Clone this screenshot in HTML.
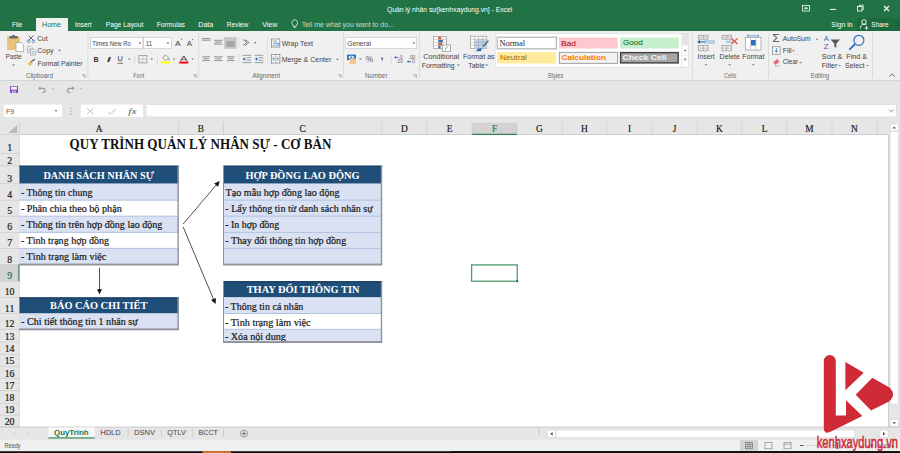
<!DOCTYPE html>
<html><head><meta charset="utf-8">
<style>
*{margin:0;padding:0}
html,body{width:900px;height:453px;overflow:hidden;background:#fff}
svg{display:block}
</style></head><body>
<svg width="900" height="453" viewBox="0 0 900 453">
<rect x="0" y="0" width="900" height="31" fill="#217346" />
<rect x="857" y="18" width="43" height="13" fill="#1b6a3d" />
<rect x="36" y="18" width="32" height="13" fill="#f0f0f0" />
<text x="387" y="11.7" font-family="'Liberation Sans', sans-serif" font-size="7.4" font-weight="normal" fill="#fff" text-anchor="start" textLength="125.2" lengthAdjust="spacingAndGlyphs" >Quản lý nhân sự[kenhxaydung.vn] - Excel</text>
<rect x="802.5" y="5.5" width="7" height="5.5" fill="none" stroke="#fff" stroke-width="0.8"/>
<path d="M804,8.2 L808,8.2 M806,6.8 L806,9.6" fill="none" stroke="#fff" stroke-width="0.9" />
<line x1="830" y1="9.4" x2="836" y2="9.4" stroke="#fff" stroke-width="1" />
<rect x="857.5" y="6.5" width="4.5" height="4.5" fill="none" stroke="#fff" stroke-width="0.8"/>
<path d="M859,6.5 L859,5.2 L863.2,5.2 L863.2,9.5 L862,9.5" fill="none" stroke="#fff" stroke-width="0.8" />
<path d="M884,6 L889,11 M889,6 L884,11" fill="none" stroke="#fff" stroke-width="1.1" />
<text x="12" y="27.3" font-family="'Liberation Sans', sans-serif" font-size="7.2" font-weight="normal" fill="#fff" text-anchor="start" textLength="10.3" lengthAdjust="spacingAndGlyphs" >File</text>
<text x="75" y="27.3" font-family="'Liberation Sans', sans-serif" font-size="7.2" font-weight="normal" fill="#fff" text-anchor="start" textLength="16.7" lengthAdjust="spacingAndGlyphs" >Insert</text>
<text x="105.7" y="27.3" font-family="'Liberation Sans', sans-serif" font-size="7.2" font-weight="normal" fill="#fff" text-anchor="start" textLength="37.6" lengthAdjust="spacingAndGlyphs" >Page Layout</text>
<text x="156.7" y="27.3" font-family="'Liberation Sans', sans-serif" font-size="7.2" font-weight="normal" fill="#fff" text-anchor="start" textLength="28.3" lengthAdjust="spacingAndGlyphs" >Formulas</text>
<text x="198.3" y="27.3" font-family="'Liberation Sans', sans-serif" font-size="7.2" font-weight="normal" fill="#fff" text-anchor="start" textLength="15" lengthAdjust="spacingAndGlyphs" >Data</text>
<text x="226.7" y="27.3" font-family="'Liberation Sans', sans-serif" font-size="7.2" font-weight="normal" fill="#fff" text-anchor="start" textLength="21.6" lengthAdjust="spacingAndGlyphs" >Review</text>
<text x="262.3" y="27.3" font-family="'Liberation Sans', sans-serif" font-size="7.2" font-weight="normal" fill="#fff" text-anchor="start" textLength="15" lengthAdjust="spacingAndGlyphs" >View</text>
<text x="42" y="27.3" font-family="'Liberation Sans', sans-serif" font-size="7.2" font-weight="normal" fill="#217346" text-anchor="start" textLength="19" lengthAdjust="spacingAndGlyphs" >Home</text>
<path d="M292.9,25 a2.9,2.9 0 1 1 3.6,0 l-0.3,1.3 h-3 Z M293.5,27.6 h2.2" fill="none" stroke="#e6efe9" stroke-width="0.8" />
<text x="301.7" y="27.3" font-family="'Liberation Sans', sans-serif" font-size="7.0" font-weight="normal" fill="#c9ddd0" text-anchor="start" textLength="92.3" lengthAdjust="spacingAndGlyphs" >Tell me what you want to do...</text>
<text x="831.3" y="27.3" font-family="'Liberation Sans', sans-serif" font-size="7.0" font-weight="normal" fill="#fff" text-anchor="start" textLength="21.4" lengthAdjust="spacingAndGlyphs" >Sign in</text>
<circle cx="864" cy="22" r="2.3" fill="none" stroke="#fff" stroke-width="0.9"/>
<path d="M860.2,28.5 c0.3,-3 1.6,-4.3 3.8,-4.3 c1.2,0 2,0.3 2.6,1 M866.5,26.3 v3.4 M864.8,28 h3.4" fill="none" stroke="#fff" stroke-width="0.9" />
<text x="871.3" y="27.3" font-family="'Liberation Sans', sans-serif" font-size="7.0" font-weight="normal" fill="#fff" text-anchor="start" textLength="17.4" lengthAdjust="spacingAndGlyphs" >Share</text>
<rect x="0" y="31" width="900" height="49" fill="#f0f0f0" />
<rect x="0" y="80.0" width="900" height="1" fill="#d4d4d4" />
<rect x="87.5" y="33" width="0.8" height="45" fill="#d8d8d8" />
<rect x="198.3" y="33" width="0.8" height="45" fill="#d8d8d8" />
<rect x="343.3" y="33" width="0.8" height="45" fill="#d8d8d8" />
<rect x="419.2" y="33" width="0.8" height="45" fill="#d8d8d8" />
<rect x="692.2" y="33" width="0.8" height="45" fill="#d8d8d8" />
<rect x="768" y="33" width="0.8" height="45" fill="#d8d8d8" />
<rect x="872" y="33" width="0.8" height="45" fill="#d8d8d8" />
<text x="25.9" y="77.7" font-family="'Liberation Sans', sans-serif" font-size="6.6" font-weight="normal" fill="#6a6a6a" text-anchor="start" textLength="27.1" lengthAdjust="spacingAndGlyphs" >Clipboard</text>
<text x="133.3" y="77.7" font-family="'Liberation Sans', sans-serif" font-size="6.6" font-weight="normal" fill="#6a6a6a" text-anchor="start" textLength="10.9" lengthAdjust="spacingAndGlyphs" >Font</text>
<text x="252.4" y="77.7" font-family="'Liberation Sans', sans-serif" font-size="6.6" font-weight="normal" fill="#6a6a6a" text-anchor="start" textLength="27.6" lengthAdjust="spacingAndGlyphs" >Alignment</text>
<text x="365" y="77.7" font-family="'Liberation Sans', sans-serif" font-size="6.6" font-weight="normal" fill="#6a6a6a" text-anchor="start" textLength="22.5" lengthAdjust="spacingAndGlyphs" >Number</text>
<text x="547.7" y="77.7" font-family="'Liberation Sans', sans-serif" font-size="6.6" font-weight="normal" fill="#6a6a6a" text-anchor="start" textLength="15.8" lengthAdjust="spacingAndGlyphs" >Styles</text>
<text x="724" y="77.7" font-family="'Liberation Sans', sans-serif" font-size="6.6" font-weight="normal" fill="#6a6a6a" text-anchor="start" textLength="12.2" lengthAdjust="spacingAndGlyphs" >Cells</text>
<text x="810.8" y="77.7" font-family="'Liberation Sans', sans-serif" font-size="6.6" font-weight="normal" fill="#6a6a6a" text-anchor="start" textLength="18.3" lengthAdjust="spacingAndGlyphs" >Editing</text>
<path d="M82.3,74.8 h2.8 v2.8 M82.7,75.2 l2.2,2.2" fill="none" stroke="#888" stroke-width="0.6" />
<path d="M193.5,74.8 h2.8 v2.8 M193.9,75.2 l2.2,2.2" fill="none" stroke="#888" stroke-width="0.6" />
<path d="M338.5,74.8 h2.8 v2.8 M338.9,75.2 l2.2,2.2" fill="none" stroke="#888" stroke-width="0.6" />
<path d="M413.5,74.8 h2.8 v2.8 M413.9,75.2 l2.2,2.2" fill="none" stroke="#888" stroke-width="0.6" />
<path d="M889.5,76.5 L892.2,74 L894.9,76.5" fill="none" stroke="#555" stroke-width="0.9" />
<rect x="7.1" y="36.4" width="12.5" height="13.5" fill="#eac27a" />
<path d="M9.3,38.6 v-1.6 q0,-1 1,-1 h1.9 a1.3,1.3 0 0 1 2.6,0 h1.9 q1,0 1,1 v1.6 Z" fill="#6b6b6b" stroke="none" stroke-width="1" />
<path d="M16,42.5 h5.2 l2.4,2.4 v6.7 h-7.6 Z" fill="#fff" stroke="#9a9a9a" stroke-width="0.7" />
<text x="5.8" y="59.3" font-family="'Liberation Sans', sans-serif" font-size="7.0" font-weight="normal" fill="#444" text-anchor="start" textLength="15.9" lengthAdjust="spacingAndGlyphs" >Paste</text>
<path d="M12.05,64.6 L14.95,64.6 L13.5,66.05 Z" fill="#666" stroke="none" stroke-width="1" />
<path d="M28.5,35.5 L33.5,40.5 M33.5,35.5 L28.5,40.5" fill="none" stroke="#555" stroke-width="0.9" />
<circle cx="28.6" cy="41.4" r="1.3" fill="none" stroke="#4a7fc1" stroke-width="0.8"/>
<circle cx="33.4" cy="41.4" r="1.3" fill="none" stroke="#4a7fc1" stroke-width="0.8"/>
<text x="37.3" y="41.2" font-family="'Liberation Sans', sans-serif" font-size="7.0" font-weight="normal" fill="#444" text-anchor="start" textLength="10.2" lengthAdjust="spacingAndGlyphs" >Cut</text>
<path d="M27.6,46.6 h3.6 l1,1 v5 h-4.6 Z" fill="#fff" stroke="#8a8a8a" stroke-width="0.6" />
<line x1="28.5" y1="49" x2="30.8" y2="49" stroke="#4a7fc1" stroke-width="0.6" />
<line x1="28.5" y1="50.6" x2="30.8" y2="50.6" stroke="#4a7fc1" stroke-width="0.6" />
<path d="M30.6,49.2 h3.8 l1,1 v4.8 h-4.8 Z" fill="#fff" stroke="#8a8a8a" stroke-width="0.6" />
<line x1="31.6" y1="51.6" x2="34.4" y2="51.6" stroke="#4a7fc1" stroke-width="0.6" />
<line x1="31.6" y1="53.2" x2="34.4" y2="53.2" stroke="#4a7fc1" stroke-width="0.6" />
<text x="37.3" y="53.3" font-family="'Liberation Sans', sans-serif" font-size="7.0" font-weight="normal" fill="#444" text-anchor="start" textLength="16.2" lengthAdjust="spacingAndGlyphs" >Copy</text>
<path d="M58.15,49.8 L61.050000000000004,49.8 L59.6,51.25 Z" fill="#666" stroke="none" stroke-width="1" />
<path d="M27.8,63.6 l2.6,-2.4 l2.2,2.2 l-2.6,2.6 Z" fill="#e8b968" stroke="none" stroke-width="1" />
<path d="M31,61.8 l3.8,-2.6" fill="none" stroke="#555" stroke-width="1.3" />
<text x="37.5" y="65.9" font-family="'Liberation Sans', sans-serif" font-size="7.0" font-weight="normal" fill="#444" text-anchor="start" textLength="45.1" lengthAdjust="spacingAndGlyphs" >Format Painter</text>
<rect x="90.5" y="37.5" width="52.3" height="10.8" fill="#fff" stroke="#c6c6c6" stroke-width="0.7"/>
<text x="92.3" y="45.8" font-family="'Liberation Sans', sans-serif" font-size="7.0" font-weight="normal" fill="#444" text-anchor="start" textLength="38.5" lengthAdjust="spacingAndGlyphs" >Times New Ro</text>
<path d="M138.35000000000002,42.5 L141.25,42.5 L139.8,43.95 Z" fill="#555" stroke="none" stroke-width="1" />
<rect x="143.7" y="37.5" width="27.6" height="10.8" fill="#fff" stroke="#c6c6c6" stroke-width="0.7"/>
<text x="145.7" y="45.8" font-family="'Liberation Sans', sans-serif" font-size="7.0" font-weight="normal" fill="#444" text-anchor="start" textLength="6.6" lengthAdjust="spacingAndGlyphs" >11</text>
<path d="M166.55,42.5 L169.45,42.5 L168,43.95 Z" fill="#555" stroke="none" stroke-width="1" />
<text x="175" y="46" font-family="'Liberation Sans', sans-serif" font-size="7.8" font-weight="normal" fill="#444" text-anchor="start" textLength="5.6" lengthAdjust="spacingAndGlyphs" >A</text>
<circle cx="181.6" cy="39.2" r="0.6" fill="#2f6fc0"/>
<text x="186.7" y="46" font-family="'Liberation Sans', sans-serif" font-size="6.6" font-weight="normal" fill="#444" text-anchor="start" textLength="5.2" lengthAdjust="spacingAndGlyphs" >A</text>
<circle cx="192.6" cy="39.7" r="0.6" fill="#2f6fc0"/>
<text x="93.4" y="61.8" font-family="'Liberation Sans', sans-serif" font-size="7.4" font-weight="bold" fill="#333" text-anchor="start" textLength="5" lengthAdjust="spacingAndGlyphs" >B</text>
<text x="106.9" y="61.8" font-family="'Liberation Sans', sans-serif" font-size="7.4" font-weight="bold" fill="#333" text-anchor="start" textLength="3.6" lengthAdjust="spacingAndGlyphs" font-style="italic">I</text>
<text x="117.6" y="61.4" font-family="'Liberation Sans', sans-serif" font-size="7.2" font-weight="normal" fill="#333" text-anchor="start" textLength="5.3" lengthAdjust="spacingAndGlyphs" >U</text>
<line x1="117.5" y1="63.2" x2="123" y2="63.2" stroke="#333" stroke-width="0.7" />
<path d="M127.74999999999999,58.6 L130.64999999999998,58.6 L129.2,60.050000000000004 Z" fill="#777" stroke="none" stroke-width="1" />
<rect x="134.5" y="55" width="0.7" height="9" fill="#d0d0d0" />
<rect x="138.9" y="55.4" width="8" height="7.5" fill="none" stroke="#8a8a8a" stroke-width="0.7"/>
<line x1="142.9" y1="55.4" x2="142.9" y2="62.9" stroke="#aaa" stroke-width="0.5" />
<line x1="138.9" y1="59.15" x2="146.9" y2="59.15" stroke="#aaa" stroke-width="0.5" />
<path d="M150.25,58.6 L153.14999999999998,58.6 L151.7,60.050000000000004 Z" fill="#777" stroke="none" stroke-width="1" />
<rect x="157" y="55" width="0.7" height="9" fill="#d0d0d0" />
<path d="M162.6,57.6 l3,-2.6 l3,3 l-2.8,2.4 Z" fill="#fff" stroke="#666" stroke-width="0.7" />
<path d="M169,58.2 q1.2,1.4 0,2.2 q-1.2,-0.8 0,-2.2 Z" fill="#2f6fc0" stroke="none" stroke-width="1" />
<rect x="160.8" y="61.4" width="9.5" height="2" fill="#ffff00" />
<path d="M172.55,58.6 L175.45,58.6 L174,60.050000000000004 Z" fill="#777" stroke="none" stroke-width="1" />
<text x="180" y="60.8" font-family="'Liberation Sans', sans-serif" font-size="7.0" font-weight="normal" fill="#444" text-anchor="start" textLength="7.5" lengthAdjust="spacingAndGlyphs" >A</text>
<rect x="179.2" y="61.6" width="9.2" height="1.9" fill="#ff0000" />
<path d="M191.05,58.6 L193.95,58.6 L192.5,60.050000000000004 Z" fill="#777" stroke="none" stroke-width="1" />
<line x1="201.8" y1="38.6" x2="210.5" y2="38.6" stroke="#777" stroke-width="0.8" />
<line x1="201.8" y1="40.2" x2="210.5" y2="40.2" stroke="#777" stroke-width="0.8" />
<line x1="214.0" y1="40.3" x2="222.6" y2="40.3" stroke="#777" stroke-width="0.8" />
<line x1="215.05" y1="42.199999999999996" x2="221.55" y2="42.199999999999996" stroke="#777" stroke-width="0.8" />
<line x1="214.0" y1="44.099999999999994" x2="222.6" y2="44.099999999999994" stroke="#777" stroke-width="0.8" />
<rect x="224.2" y="37.2" width="12.5" height="11.6" fill="#c6c6c6" />
<line x1="226.5" y1="42.2" x2="234.7" y2="42.2" stroke="#777" stroke-width="0.8" />
<line x1="226.5" y1="44.1" x2="234.7" y2="44.1" stroke="#777" stroke-width="0.8" />
<line x1="226.5" y1="46.0" x2="234.7" y2="46.0" stroke="#777" stroke-width="0.8" />
<path d="M243,39.5 l4,3 l-4,3 M245,39.5 l4,3 l-4,3" fill="none" stroke="#666" stroke-width="0.8" />
<path d="M253.75,42.2 L256.65,42.2 L255.2,43.650000000000006 Z" fill="#666" stroke="none" stroke-width="1" />
<line x1="202.2" y1="56.8" x2="209.89999999999998" y2="56.8" stroke="#777" stroke-width="0.8" />
<line x1="203.29999999999998" y1="58.699999999999996" x2="208.79999999999998" y2="58.699999999999996" stroke="#777" stroke-width="0.8" />
<line x1="202.2" y1="60.599999999999994" x2="209.89999999999998" y2="60.599999999999994" stroke="#777" stroke-width="0.8" />
<line x1="214.0" y1="56.8" x2="222.6" y2="56.8" stroke="#777" stroke-width="0.8" />
<line x1="215.3" y1="58.699999999999996" x2="221.3" y2="58.699999999999996" stroke="#777" stroke-width="0.8" />
<line x1="214.0" y1="60.599999999999994" x2="222.6" y2="60.599999999999994" stroke="#777" stroke-width="0.8" />
<line x1="227.0" y1="56.8" x2="234.5" y2="56.8" stroke="#777" stroke-width="0.8" />
<line x1="228.0" y1="58.699999999999996" x2="233.5" y2="58.699999999999996" stroke="#777" stroke-width="0.8" />
<line x1="227.0" y1="60.599999999999994" x2="234.5" y2="60.599999999999994" stroke="#777" stroke-width="0.8" />
<rect x="238.6" y="54" width="0.7" height="9" fill="#d8d8d8" />
<rect x="238.6" y="37" width="0.7" height="11" fill="#d8d8d8" />
<line x1="242.5" y1="55.3" x2="251.3" y2="55.3" stroke="#777" stroke-width="0.7" />
<line x1="242.5" y1="62.6" x2="251.3" y2="62.6" stroke="#777" stroke-width="0.7" />
<line x1="246.7" y1="57.7" x2="251.3" y2="57.7" stroke="#777" stroke-width="0.7" />
<line x1="246.7" y1="60.2" x2="251.3" y2="60.2" stroke="#777" stroke-width="0.7" />
<path d="M242.5,59 l2.2,-1.7 v3.4 Z" fill="#2f6fc0" stroke="none" stroke-width="1" />
<line x1="244.3" y1="59" x2="246.1" y2="59" stroke="#2f6fc0" stroke-width="0.9" />
<line x1="254.6" y1="55.3" x2="263.4" y2="55.3" stroke="#777" stroke-width="0.7" />
<line x1="254.6" y1="62.6" x2="263.4" y2="62.6" stroke="#777" stroke-width="0.7" />
<line x1="258.8" y1="57.7" x2="263.4" y2="57.7" stroke="#777" stroke-width="0.7" />
<line x1="258.8" y1="60.2" x2="263.4" y2="60.2" stroke="#777" stroke-width="0.7" />
<path d="M258.2,59 l-2.4,-1.8 v3.6 Z M254.6,59 h1.6" fill="none" stroke="none" stroke-width="1" />
<path d="M258.2,59 l-2.2,-1.7 v3.4 Z" fill="#2f6fc0" stroke="none" stroke-width="1" />
<line x1="254.6" y1="59" x2="256.4" y2="59" stroke="#2f6fc0" stroke-width="0.9" />
<rect x="267.3" y="37" width="0.7" height="28" fill="#d8d8d8" />
<rect x="271.4" y="39" width="8.4" height="8" fill="#fff" stroke="#777" stroke-width="0.7"/>
<line x1="272.6" y1="41" x2="276.8" y2="41" stroke="#777" stroke-width="0.7" />
<line x1="272.6" y1="45.2" x2="275" y2="45.2" stroke="#777" stroke-width="0.7" />
<path d="M273,43.1 h4.6 q1.6,0 1.6,1 q0,1.1 -1.6,1.1 h-1" fill="none" stroke="#2f6fc0" stroke-width="0.8" />
<path d="M276.4,44.3 l-1.2,0.9 l1.2,0.9 Z" fill="#2f6fc0" stroke="none" stroke-width="1" />
<text x="281.7" y="45.5" font-family="'Liberation Sans', sans-serif" font-size="7.0" font-weight="normal" fill="#444" text-anchor="start" textLength="31.3" lengthAdjust="spacingAndGlyphs" >Wrap Text</text>
<rect x="271.3" y="54.6" width="8.6" height="8.4" fill="#fff" stroke="#777" stroke-width="0.7"/>
<line x1="271.3" y1="57" x2="279.9" y2="57" stroke="#999" stroke-width="0.5" />
<line x1="271.3" y1="60.6" x2="279.9" y2="60.6" stroke="#999" stroke-width="0.5" />
<line x1="275.6" y1="54.6" x2="275.6" y2="57" stroke="#999" stroke-width="0.5" />
<line x1="275.6" y1="60.6" x2="275.6" y2="63" stroke="#999" stroke-width="0.5" />
<line x1="272.8" y1="58.8" x2="278.4" y2="58.8" stroke="#2f6fc0" stroke-width="0.7" />
<path d="M272.4,58.8 l1.3,-1 v2 Z M278.8,58.8 l-1.3,-1 v2 Z" fill="#2f6fc0" stroke="none" stroke-width="1" />
<text x="281.7" y="62.2" font-family="'Liberation Sans', sans-serif" font-size="7.0" font-weight="normal" fill="#444" text-anchor="start" textLength="49.6" lengthAdjust="spacingAndGlyphs" >Merge &amp; Center</text>
<path d="M336.05,58.8 L338.95,58.8 L337.5,60.25 Z" fill="#666" stroke="none" stroke-width="1" />
<rect x="345.5" y="37.5" width="71.2" height="10.8" fill="#fff" stroke="#c6c6c6" stroke-width="0.7"/>
<text x="347.3" y="45.8" font-family="'Liberation Sans', sans-serif" font-size="7.0" font-weight="normal" fill="#444" text-anchor="start" textLength="23.6" lengthAdjust="spacingAndGlyphs" >General</text>
<path d="M412.35,42.5 L415.25,42.5 L413.8,43.95 Z" fill="#555" stroke="none" stroke-width="1" />
<rect x="347" y="54.6" width="9" height="5.4" fill="#2f6fc0" />
<ellipse cx="351.3" cy="57.3" rx="2.8" ry="1.5" fill="#fff"/>
<rect x="349.8" y="58.6" width="6.2" height="5.6" fill="#f3c58c" />
<rect x="350.2" y="56.6" width="2" height="1.6" fill="#2f6fc0" />
<path d="M358.85,58.6 L361.75,58.6 L360.3,60.050000000000004 Z" fill="#777" stroke="none" stroke-width="1" />
<text x="365.8" y="62.2" font-family="'Liberation Sans', sans-serif" font-size="8.6" font-weight="normal" fill="#555" text-anchor="start" textLength="7.4" lengthAdjust="spacingAndGlyphs" >%</text>
<text x="380.8" y="58.6" font-family="'Liberation Sans', sans-serif" font-size="9.5" font-weight="bold" fill="#333" text-anchor="start" >,</text>
<rect x="390.8" y="55" width="0.7" height="9" fill="#d0d0d0" />
<text x="398.6" y="58.8" font-family="'Liberation Sans', sans-serif" font-size="4.8" font-weight="normal" fill="#666" text-anchor="start" >.0</text>
<text x="396.2" y="63.4" font-family="'Liberation Sans', sans-serif" font-size="4.8" font-weight="normal" fill="#666" text-anchor="start" >.00</text>
<path d="M394,57.4 l2,-1.4 v2.8 Z" fill="#2f6fc0" stroke="none" stroke-width="1" />
<line x1="395.5" y1="57.4" x2="398.2" y2="57.4" stroke="#2f6fc0" stroke-width="1" />
<text x="408.6" y="58.8" font-family="'Liberation Sans', sans-serif" font-size="4.8" font-weight="normal" fill="#666" text-anchor="start" >.00</text>
<text x="410.8" y="63.4" font-family="'Liberation Sans', sans-serif" font-size="4.8" font-weight="normal" fill="#666" text-anchor="start" >.0</text>
<path d="M406.7,61.6 l2,-1.4 v2.8 Z" fill="#2f6fc0" stroke="none" stroke-width="1" />
<line x1="408.2" y1="61.6" x2="410.8" y2="61.6" stroke="#2f6fc0" stroke-width="1" />
<rect x="433.3" y="36.6" width="13.4" height="12" fill="#fff" stroke="#8a8a8a" stroke-width="0.6"/>
<line x1="433.3" y1="39.6" x2="446.7" y2="39.6" stroke="#b0b0b0" stroke-width="0.5" />
<line x1="433.3" y1="42.6" x2="446.7" y2="42.6" stroke="#b0b0b0" stroke-width="0.5" />
<line x1="433.3" y1="45.6" x2="446.7" y2="45.6" stroke="#b0b0b0" stroke-width="0.5" />
<line x1="438.2" y1="36.6" x2="438.2" y2="48.6" stroke="#b0b0b0" stroke-width="0.5" />
<line x1="443" y1="36.6" x2="443" y2="48.6" stroke="#b0b0b0" stroke-width="0.5" />
<rect x="438.4" y="36.9" width="2.8" height="2.5" fill="#e0542a" />
<rect x="438.4" y="39.9" width="4.4" height="2.5" fill="#2f6fc0" />
<rect x="438.4" y="42.9" width="3.6" height="2.5" fill="#e0542a" />
<rect x="438.4" y="45.9" width="2.2" height="2.5" fill="#2f6fc0" />
<rect x="442.2" y="45" width="8.3" height="6.3" fill="#fff" stroke="#8a8a8a" stroke-width="0.7"/>
<path d="M447.4,46.3 l-2.6,4" fill="none" stroke="#666" stroke-width="0.7" />
<text x="423.3" y="59.2" font-family="'Liberation Sans', sans-serif" font-size="7.0" font-weight="normal" fill="#444" text-anchor="start" textLength="35.9" lengthAdjust="spacingAndGlyphs" >Conditional</text>
<text x="421.7" y="67.6" font-family="'Liberation Sans', sans-serif" font-size="7.0" font-weight="normal" fill="#444" text-anchor="start" textLength="33" lengthAdjust="spacingAndGlyphs" >Formatting</text>
<path d="M457.05,64.5 L459.95,64.5 L458.5,65.95 Z" fill="#666" stroke="none" stroke-width="1" />
<rect x="470.6" y="36.2" width="16.2" height="12.2" fill="#fff" stroke="#8a8a8a" stroke-width="0.6"/>
<rect x="474.6" y="39.2" width="12.2" height="9.2" fill="#bcd3ef" />
<line x1="470.6" y1="39.2" x2="486.8" y2="39.2" stroke="#a0a0a0" stroke-width="0.5" />
<line x1="470.6" y1="42.2" x2="486.8" y2="42.2" stroke="#a0a0a0" stroke-width="0.5" />
<line x1="470.6" y1="45.2" x2="486.8" y2="45.2" stroke="#a0a0a0" stroke-width="0.5" />
<line x1="474.6" y1="36.2" x2="474.6" y2="48.4" stroke="#a0a0a0" stroke-width="0.5" />
<line x1="478.6" y1="36.2" x2="478.6" y2="48.4" stroke="#a0a0a0" stroke-width="0.5" />
<line x1="482.6" y1="36.2" x2="482.6" y2="48.4" stroke="#a0a0a0" stroke-width="0.5" />
<path d="M475.6,51.2 q2.6,-3.6 6.2,-3 l-0.8,3 Z" fill="#2f6fc0" stroke="none" stroke-width="1" />
<path d="M483.2,46.4 l5.2,-5.6" fill="none" stroke="#666" stroke-width="1.4" />
<text x="463" y="59.2" font-family="'Liberation Sans', sans-serif" font-size="7.0" font-weight="normal" fill="#444" text-anchor="start" textLength="31.6" lengthAdjust="spacingAndGlyphs" >Format as</text>
<text x="468.3" y="67.6" font-family="'Liberation Sans', sans-serif" font-size="7.0" font-weight="normal" fill="#444" text-anchor="start" textLength="16.5" lengthAdjust="spacingAndGlyphs" >Table</text>
<path d="M485.35,64.5 L488.25,64.5 L486.8,65.95 Z" fill="#666" stroke="none" stroke-width="1" />
<rect x="495.3" y="33.6" width="193.4" height="33.6" fill="#fff" stroke="#dadada" stroke-width="0.6"/>
<rect x="497.2" y="37.2" width="59.2" height="11.6" fill="#fff" stroke="#b8b8b8" stroke-width="1.3"/>
<text x="499.5" y="45.5" font-family="'Liberation Serif', serif" font-size="8.4" font-weight="normal" fill="#222" text-anchor="start" textLength="25.5" lengthAdjust="spacingAndGlyphs" >Normal</text>
<rect x="559" y="37.5" width="58.8" height="11" fill="#ffc7ce" />
<text x="561" y="45.5" font-family="'Liberation Sans', sans-serif" font-size="7.7" font-weight="normal" fill="#9c0006" text-anchor="start" textLength="15" lengthAdjust="spacingAndGlyphs" >Bad</text>
<rect x="620" y="37.5" width="58.7" height="11" fill="#c6efce" />
<text x="622.9" y="45.4" font-family="'Liberation Sans', sans-serif" font-size="7.7" font-weight="normal" fill="#006100" text-anchor="start" textLength="19.8" lengthAdjust="spacingAndGlyphs" >Good</text>
<rect x="497.2" y="52" width="58.8" height="11.5" fill="#ffeb9c" />
<text x="500" y="60" font-family="'Liberation Sans', sans-serif" font-size="7.7" font-weight="normal" fill="#9c6500" text-anchor="start" textLength="27" lengthAdjust="spacingAndGlyphs" >Neutral</text>
<rect x="559.3" y="52.3" width="58.4" height="11" fill="#f2f2f2" stroke="#8a8a8a" stroke-width="0.8"/>
<text x="561.5" y="59.9" font-family="'Liberation Sans', sans-serif" font-size="7.7" font-weight="bold" fill="#fa7d00" text-anchor="start" textLength="44.5" lengthAdjust="spacingAndGlyphs" >Calculation</text>
<rect x="620.6" y="52.6" width="57.6" height="10.3" fill="#a5a5a5" stroke="#3f3f3f" stroke-width="1.4"/>
<text x="622.5" y="59.9" font-family="'Liberation Sans', sans-serif" font-size="7.7" font-weight="bold" fill="#f4f4f4" text-anchor="start" textLength="44" lengthAdjust="spacingAndGlyphs" >Check Cell</text>
<rect x="681.8" y="33.6" width="6.9" height="33.6" fill="#fff" stroke="#d8d8d8" stroke-width="0.6"/>
<rect x="682.2" y="34" width="6.1" height="10.8" fill="#e3e3e3" />
<line x1="681.8" y1="45.7" x2="688.7" y2="45.7" stroke="#dadada" stroke-width="0.5" />
<line x1="681.8" y1="55.2" x2="688.7" y2="55.2" stroke="#dadada" stroke-width="0.5" />
<path d="M684,50.6 h2.4" fill="none" stroke="#444" stroke-width="0.8" />
<path d="M683.9,59.6 h2.6 l-1.3,1.3 Z M683.9,58.4 h2.6" fill="none" stroke="#777" stroke-width="0.5" />
<rect x="698.5" y="35.2" width="9.5" height="4" fill="none" stroke="#888" stroke-width="0.6"/>
<line x1="703.25" y1="35.2" x2="703.25" y2="39.2" stroke="#888" stroke-width="0.5" />
<line x1="698.5" y1="37.2" x2="708.0" y2="37.2" stroke="#888" stroke-width="0.5" />
<rect x="698.5" y="45.5" width="9.5" height="5.3" fill="none" stroke="#888" stroke-width="0.6"/>
<line x1="703.25" y1="45.5" x2="703.25" y2="50.8" stroke="#888" stroke-width="0.5" />
<line x1="698.5" y1="48.15" x2="708.0" y2="48.15" stroke="#888" stroke-width="0.5" />
<rect x="705" y="40.6" width="9.5" height="2.6" fill="#b7cfee" stroke="#8aa9d6" stroke-width="0.4"/>
<path d="M697,41.9 l3,-2.2 v1.6 h5 v1.2 h-5 v1.6 Z" fill="#2f6fc0" stroke="none" stroke-width="1" />
<text x="697.6" y="59" font-family="'Liberation Sans', sans-serif" font-size="7.0" font-weight="normal" fill="#444" text-anchor="start" textLength="17.1" lengthAdjust="spacingAndGlyphs" >Insert</text>
<path d="M704.55,64.3 L707.45,64.3 L706,65.75 Z" fill="#777" stroke="none" stroke-width="1" />
<rect x="722" y="35.2" width="9.5" height="4" fill="none" stroke="#888" stroke-width="0.6"/>
<line x1="726.75" y1="35.2" x2="726.75" y2="39.2" stroke="#888" stroke-width="0.5" />
<line x1="722" y1="37.2" x2="731.5" y2="37.2" stroke="#888" stroke-width="0.5" />
<rect x="722" y="45.5" width="9.5" height="5.3" fill="none" stroke="#888" stroke-width="0.6"/>
<line x1="726.75" y1="45.5" x2="726.75" y2="50.8" stroke="#888" stroke-width="0.5" />
<line x1="722" y1="48.15" x2="731.5" y2="48.15" stroke="#888" stroke-width="0.5" />
<rect x="726" y="40.6" width="7" height="2.6" fill="#b7cfee" />
<path d="M731.5,38.5 l6,5.5 M737.5,38.5 l-6,5.5" fill="none" stroke="#e0542a" stroke-width="1.1" />
<text x="719.6" y="59" font-family="'Liberation Sans', sans-serif" font-size="7.0" font-weight="normal" fill="#444" text-anchor="start" textLength="20.3" lengthAdjust="spacingAndGlyphs" >Delete</text>
<path d="M728.15,64.3 L731.0500000000001,64.3 L729.6,65.75 Z" fill="#777" stroke="none" stroke-width="1" />
<rect x="745.5" y="37.5" width="15.5" height="12.5" fill="#fff" stroke="#888" stroke-width="0.6"/>
<line x1="750.7" y1="37.5" x2="750.7" y2="50" stroke="#aaa" stroke-width="0.5" />
<line x1="755.8" y1="37.5" x2="755.8" y2="50" stroke="#aaa" stroke-width="0.5" />
<rect x="750.9" y="40" width="4.8" height="5.5" fill="#2f6fc0" />
<path d="M747,35.8 h12 M747,35.8 l1.5,-1 M747,35.8 l1.5,1 M759,35.8 l-1.5,-1 M759,35.8 l-1.5,1" fill="none" stroke="#2f6fc0" stroke-width="0.6" />
<text x="742.3" y="59" font-family="'Liberation Sans', sans-serif" font-size="7.0" font-weight="normal" fill="#444" text-anchor="start" textLength="22.1" lengthAdjust="spacingAndGlyphs" >Format</text>
<path d="M751.8499999999999,64.3 L754.75,64.3 L753.3,65.75 Z" fill="#777" stroke="none" stroke-width="1" />
<text x="772.2" y="42" font-family="'Liberation Sans', sans-serif" font-size="10" font-weight="normal" fill="#555" text-anchor="start" textLength="7.6" lengthAdjust="spacingAndGlyphs" >Σ</text>
<text x="782.7" y="40.9" font-family="'Liberation Sans', sans-serif" font-size="7.0" font-weight="normal" fill="#444" text-anchor="start" textLength="28.1" lengthAdjust="spacingAndGlyphs" >AutoSum</text>
<path d="M815.55,38.8 L818.45,38.8 L817,40.25 Z" fill="#777" stroke="none" stroke-width="1" />
<rect x="772.6" y="46.8" width="7.5" height="7.4" fill="#fff" stroke="#777" stroke-width="0.7"/>
<path d="M776.3,48 v4 M774.5,50.6 l1.8,1.8 l1.8,-1.8" fill="none" stroke="#2f6fc0" stroke-width="0.9" />
<text x="782.7" y="52.5" font-family="'Liberation Sans', sans-serif" font-size="7.0" font-weight="normal" fill="#444" text-anchor="start" textLength="9" lengthAdjust="spacingAndGlyphs" >Fill</text>
<path d="M792.05,50.3 L794.95,50.3 L793.5,51.75 Z" fill="#777" stroke="none" stroke-width="1" />
<path d="M773,62.5 l4,-3.5 l2.5,2.5 l-4,3.5 Z" fill="#e86a7a" stroke="none" stroke-width="1" />
<line x1="775" y1="66" x2="780" y2="66" stroke="#777" stroke-width="0.5" />
<text x="782.7" y="64.3" font-family="'Liberation Sans', sans-serif" font-size="7.0" font-weight="normal" fill="#444" text-anchor="start" textLength="15.5" lengthAdjust="spacingAndGlyphs" >Clear</text>
<path d="M799.05,62 L801.95,62 L800.5,63.45 Z" fill="#777" stroke="none" stroke-width="1" />
<text x="823.8" y="40.8" font-family="'Liberation Sans', sans-serif" font-size="7.0" font-weight="normal" fill="#2f6fc0" text-anchor="start" textLength="5" lengthAdjust="spacingAndGlyphs" >A</text>
<text x="823.8" y="49.2" font-family="'Liberation Sans', sans-serif" font-size="7.0" font-weight="normal" fill="#8b3fb5" text-anchor="start" textLength="5" lengthAdjust="spacingAndGlyphs" >Z</text>
<path d="M830.5,39.5 h9.5 l-3.7,4 v4.2 l-2,-1 v-3.2 Z" fill="#555" stroke="none" stroke-width="1" />
<text x="821.8" y="59" font-family="'Liberation Sans', sans-serif" font-size="7.0" font-weight="normal" fill="#444" text-anchor="start" textLength="20.8" lengthAdjust="spacingAndGlyphs" >Sort &amp;</text>
<text x="821.8" y="67.6" font-family="'Liberation Sans', sans-serif" font-size="7.0" font-weight="normal" fill="#444" text-anchor="start" textLength="15.5" lengthAdjust="spacingAndGlyphs" >Filter</text>
<path d="M838.15,64.9 L841.0500000000001,64.9 L839.6,66.35000000000001 Z" fill="#777" stroke="none" stroke-width="1" />
<circle cx="858.9" cy="40.3" r="5" fill="none" stroke="#2f6fc0" stroke-width="1.2"/>
<path d="M855.2,44 l-5.8,5.6" fill="none" stroke="#2f6fc0" stroke-width="1.8" />
<text x="846.3" y="59" font-family="'Liberation Sans', sans-serif" font-size="7.0" font-weight="normal" fill="#444" text-anchor="start" textLength="20.7" lengthAdjust="spacingAndGlyphs" >Find &amp;</text>
<text x="845" y="67.6" font-family="'Liberation Sans', sans-serif" font-size="7.0" font-weight="normal" fill="#444" text-anchor="start" textLength="19.5" lengthAdjust="spacingAndGlyphs" >Select</text>
<path d="M865.9499999999999,64.9 L868.85,64.9 L867.4,66.35000000000001 Z" fill="#777" stroke="none" stroke-width="1" />
<rect x="0" y="81" width="900" height="41" fill="#e6e6e6" />
<rect x="10" y="86" width="8" height="7" fill="#8a4cc0" />
<rect x="11.2" y="86.8" width="5.6" height="2.8" fill="#fff" />
<rect x="12.2" y="90.8" width="3.8" height="2.2" fill="#e8dcf2" />
<rect x="13.2" y="91.4" width="0.9" height="1.6" fill="#8a4cc0" />
<rect x="14.6" y="91.4" width="0.9" height="1.6" fill="#8a4cc0" />
<path d="M39.8,88.3 H43 A2.1,2.1 0 0 1 43,92.5 H42.2" fill="none" stroke="#9a9a9a" stroke-width="1.2" />
<path d="M38,88.3 L40.4,86.3 L40.4,90.3 Z" fill="#9a9a9a" stroke="none" stroke-width="1" />
<path d="M51.55,88.3 L54.45,88.3 L53,89.75 Z" fill="#b5b5b5" stroke="none" stroke-width="1" />
<path d="M72.8,88.3 H69.6 A2.1,2.1 0 0 0 69.6,92.5 H70.4" fill="none" stroke="#9a9a9a" stroke-width="1.2" />
<path d="M74.6,88.3 L72.2,86.3 L72.2,90.3 Z" fill="#9a9a9a" stroke="none" stroke-width="1" />
<path d="M79.85,88.3 L82.75,88.3 L81.3,89.75 Z" fill="#b5b5b5" stroke="none" stroke-width="1" />
<rect x="3.8" y="104.6" width="58.2" height="12.3" fill="#fff" />
<text x="6" y="113.6" font-family="'Liberation Sans', sans-serif" font-size="7.4" font-weight="normal" fill="#555" text-anchor="start" textLength="8" lengthAdjust="spacingAndGlyphs" >F9</text>
<path d="M54.55,110.2 L57.45,110.2 L56,111.65 Z" fill="#555" stroke="none" stroke-width="1" />
<rect x="70.4" y="107.5" width="1" height="1" fill="#888" />
<rect x="70.4" y="110.5" width="1" height="1" fill="#888" />
<rect x="70.4" y="113.5" width="1" height="1" fill="#888" />
<rect x="80.7" y="104.6" width="62.3" height="12.3" fill="#fff" />
<path d="M87,108.3 l6.5,6 M93.5,108.3 l-6.5,6" fill="none" stroke="#b0b0b0" stroke-width="0.8" />
<path d="M107.6,111.8 l2.6,2.4 l5.4,-5" fill="none" stroke="#b0b0b0" stroke-width="0.9" />
<text x="128.3" y="114" font-family="'Liberation Serif', serif" font-size="9" font-weight="normal" fill="#555" text-anchor="start" textLength="8.3" lengthAdjust="spacingAndGlyphs" font-style="italic">fx</text>
<rect x="146" y="104.6" width="750.3" height="12.3" fill="#fdfdfd" stroke="#d6d6d6" stroke-width="0.5"/>
<path d="M889.5,109.8 l2,1.8 l2,-1.8" fill="none" stroke="#555" stroke-width="0.7" />
<rect x="0" y="122" width="888" height="12.8" fill="#e6e6e6" />
<rect x="472" y="122.8" width="45" height="11.4" fill="#d3d3d3" />
<rect x="19.1" y="122" width="0.8" height="12.5" fill="#cfcfcf" />
<rect x="178.2" y="122" width="0.8" height="12.5" fill="#cfcfcf" />
<rect x="223.0" y="122" width="0.8" height="12.5" fill="#cfcfcf" />
<rect x="381.6" y="122" width="0.8" height="12.5" fill="#cfcfcf" />
<rect x="426.6" y="122" width="0.8" height="12.5" fill="#cfcfcf" />
<rect x="471.6" y="122" width="0.8" height="12.5" fill="#cfcfcf" />
<rect x="516.6" y="122" width="0.8" height="12.5" fill="#cfcfcf" />
<rect x="561.6" y="122" width="0.8" height="12.5" fill="#cfcfcf" />
<rect x="606.6" y="122" width="0.8" height="12.5" fill="#cfcfcf" />
<rect x="651.6" y="122" width="0.8" height="12.5" fill="#cfcfcf" />
<rect x="696.6" y="122" width="0.8" height="12.5" fill="#cfcfcf" />
<rect x="741.6" y="122" width="0.8" height="12.5" fill="#cfcfcf" />
<rect x="786.6" y="122" width="0.8" height="12.5" fill="#cfcfcf" />
<rect x="831.6" y="122" width="0.8" height="12.5" fill="#cfcfcf" />
<rect x="876.6" y="122" width="0.8" height="12.5" fill="#cfcfcf" />
<text x="99.05" y="132.1" font-family="'Liberation Serif', serif" font-size="9.4" font-weight="normal" fill="#1a1a1a" text-anchor="middle" stroke="#1a1a1a" stroke-width="0.18">A</text>
<text x="201.0" y="132.1" font-family="'Liberation Serif', serif" font-size="9.4" font-weight="normal" fill="#1a1a1a" text-anchor="middle" stroke="#1a1a1a" stroke-width="0.18">B</text>
<text x="302.7" y="132.1" font-family="'Liberation Serif', serif" font-size="9.4" font-weight="normal" fill="#1a1a1a" text-anchor="middle" stroke="#1a1a1a" stroke-width="0.18">C</text>
<text x="404.5" y="132.1" font-family="'Liberation Serif', serif" font-size="9.4" font-weight="normal" fill="#1a1a1a" text-anchor="middle" stroke="#1a1a1a" stroke-width="0.18">D</text>
<text x="449.5" y="132.1" font-family="'Liberation Serif', serif" font-size="9.4" font-weight="normal" fill="#1a1a1a" text-anchor="middle" stroke="#1a1a1a" stroke-width="0.18">E</text>
<text x="494.5" y="132.1" font-family="'Liberation Serif', serif" font-size="9.4" font-weight="normal" fill="#217346" text-anchor="middle" stroke="#217346" stroke-width="0.18">F</text>
<text x="539.5" y="132.1" font-family="'Liberation Serif', serif" font-size="9.4" font-weight="normal" fill="#1a1a1a" text-anchor="middle" stroke="#1a1a1a" stroke-width="0.18">G</text>
<text x="584.5" y="132.1" font-family="'Liberation Serif', serif" font-size="9.4" font-weight="normal" fill="#1a1a1a" text-anchor="middle" stroke="#1a1a1a" stroke-width="0.18">H</text>
<text x="629.5" y="132.1" font-family="'Liberation Serif', serif" font-size="9.4" font-weight="normal" fill="#1a1a1a" text-anchor="middle" stroke="#1a1a1a" stroke-width="0.18">I</text>
<text x="674.5" y="132.1" font-family="'Liberation Serif', serif" font-size="9.4" font-weight="normal" fill="#1a1a1a" text-anchor="middle" stroke="#1a1a1a" stroke-width="0.18">J</text>
<text x="719.5" y="132.1" font-family="'Liberation Serif', serif" font-size="9.4" font-weight="normal" fill="#1a1a1a" text-anchor="middle" stroke="#1a1a1a" stroke-width="0.18">K</text>
<text x="764.5" y="132.1" font-family="'Liberation Serif', serif" font-size="9.4" font-weight="normal" fill="#1a1a1a" text-anchor="middle" stroke="#1a1a1a" stroke-width="0.18">L</text>
<text x="809.5" y="132.1" font-family="'Liberation Serif', serif" font-size="9.4" font-weight="normal" fill="#1a1a1a" text-anchor="middle" stroke="#1a1a1a" stroke-width="0.18">M</text>
<text x="854.5" y="132.1" font-family="'Liberation Serif', serif" font-size="9.4" font-weight="normal" fill="#1a1a1a" text-anchor="middle" stroke="#1a1a1a" stroke-width="0.18">N</text>
<rect x="0" y="134.3" width="888" height="0.9" fill="#c6c6c6" />
<rect x="472.3" y="133.8" width="44.6" height="1.1" fill="#217346" />
<path d="M8.2,133 L17.2,133 L17.2,125 Z" fill="#b9b9b9" stroke="none" stroke-width="1" />
<rect x="0" y="134.8" width="19.5" height="292.2" fill="#e6e6e6" />
<rect x="0" y="264.5" width="19.5" height="16.69999999999999" fill="#d3d3d3" />
<rect x="0" y="153.0" width="19.5" height="0.8" fill="#cfcfcf" />
<rect x="0" y="165.29999999999998" width="19.5" height="0.8" fill="#cfcfcf" />
<rect x="0" y="183.29999999999998" width="19.5" height="0.8" fill="#cfcfcf" />
<rect x="0" y="199.79999999999998" width="19.5" height="0.8" fill="#cfcfcf" />
<rect x="0" y="215.79999999999998" width="19.5" height="0.8" fill="#cfcfcf" />
<rect x="0" y="232.0" width="19.5" height="0.8" fill="#cfcfcf" />
<rect x="0" y="248.0" width="19.5" height="0.8" fill="#cfcfcf" />
<rect x="0" y="264.1" width="19.5" height="0.8" fill="#cfcfcf" />
<rect x="0" y="280.8" width="19.5" height="0.8" fill="#cfcfcf" />
<rect x="0" y="297.0" width="19.5" height="0.8" fill="#cfcfcf" />
<rect x="0" y="313.1" width="19.5" height="0.8" fill="#cfcfcf" />
<rect x="0" y="328.90000000000003" width="19.5" height="0.8" fill="#cfcfcf" />
<rect x="0" y="341.6" width="19.5" height="0.8" fill="#cfcfcf" />
<rect x="0" y="353.90000000000003" width="19.5" height="0.8" fill="#cfcfcf" />
<rect x="0" y="365.90000000000003" width="19.5" height="0.8" fill="#cfcfcf" />
<rect x="0" y="378.20000000000005" width="19.5" height="0.8" fill="#cfcfcf" />
<rect x="0" y="390.40000000000003" width="19.5" height="0.8" fill="#cfcfcf" />
<rect x="0" y="402.8" width="19.5" height="0.8" fill="#cfcfcf" />
<rect x="0" y="414.8" width="19.5" height="0.8" fill="#cfcfcf" />
<rect x="0" y="426.6" width="19.5" height="0.8" fill="#cfcfcf" />
<text x="9.6" y="151.4" font-family="'Liberation Serif', serif" font-size="9.9" font-weight="normal" fill="#1a1a1a" text-anchor="middle" stroke="#1a1a1a" stroke-width="0.2">1</text>
<text x="9.6" y="163.7" font-family="'Liberation Serif', serif" font-size="9.9" font-weight="normal" fill="#1a1a1a" text-anchor="middle" stroke="#1a1a1a" stroke-width="0.2">2</text>
<text x="9.6" y="181.7" font-family="'Liberation Serif', serif" font-size="9.9" font-weight="normal" fill="#1a1a1a" text-anchor="middle" stroke="#1a1a1a" stroke-width="0.2">3</text>
<text x="9.6" y="198.2" font-family="'Liberation Serif', serif" font-size="9.9" font-weight="normal" fill="#1a1a1a" text-anchor="middle" stroke="#1a1a1a" stroke-width="0.2">4</text>
<text x="9.6" y="214.2" font-family="'Liberation Serif', serif" font-size="9.9" font-weight="normal" fill="#1a1a1a" text-anchor="middle" stroke="#1a1a1a" stroke-width="0.2">5</text>
<text x="9.6" y="230.4" font-family="'Liberation Serif', serif" font-size="9.9" font-weight="normal" fill="#1a1a1a" text-anchor="middle" stroke="#1a1a1a" stroke-width="0.2">6</text>
<text x="9.6" y="246.4" font-family="'Liberation Serif', serif" font-size="9.9" font-weight="normal" fill="#1a1a1a" text-anchor="middle" stroke="#1a1a1a" stroke-width="0.2">7</text>
<text x="9.6" y="262.5" font-family="'Liberation Serif', serif" font-size="9.9" font-weight="normal" fill="#1a1a1a" text-anchor="middle" stroke="#1a1a1a" stroke-width="0.2">8</text>
<text x="9.6" y="279.2" font-family="'Liberation Serif', serif" font-size="9.9" font-weight="normal" fill="#217346" text-anchor="middle" stroke="#217346" stroke-width="0.2">9</text>
<text x="9.6" y="295.4" font-family="'Liberation Serif', serif" font-size="9.9" font-weight="normal" fill="#1a1a1a" text-anchor="middle" stroke="#1a1a1a" stroke-width="0.2">10</text>
<text x="9.6" y="311.5" font-family="'Liberation Serif', serif" font-size="9.9" font-weight="normal" fill="#1a1a1a" text-anchor="middle" stroke="#1a1a1a" stroke-width="0.2">11</text>
<text x="9.6" y="327.3" font-family="'Liberation Serif', serif" font-size="9.9" font-weight="normal" fill="#1a1a1a" text-anchor="middle" stroke="#1a1a1a" stroke-width="0.2">12</text>
<text x="9.6" y="340.0" font-family="'Liberation Serif', serif" font-size="9.9" font-weight="normal" fill="#1a1a1a" text-anchor="middle" stroke="#1a1a1a" stroke-width="0.2">13</text>
<text x="9.6" y="352.3" font-family="'Liberation Serif', serif" font-size="9.9" font-weight="normal" fill="#1a1a1a" text-anchor="middle" stroke="#1a1a1a" stroke-width="0.2">14</text>
<text x="9.6" y="364.3" font-family="'Liberation Serif', serif" font-size="9.9" font-weight="normal" fill="#1a1a1a" text-anchor="middle" stroke="#1a1a1a" stroke-width="0.2">15</text>
<text x="9.6" y="376.6" font-family="'Liberation Serif', serif" font-size="9.9" font-weight="normal" fill="#1a1a1a" text-anchor="middle" stroke="#1a1a1a" stroke-width="0.2">16</text>
<text x="9.6" y="388.8" font-family="'Liberation Serif', serif" font-size="9.9" font-weight="normal" fill="#1a1a1a" text-anchor="middle" stroke="#1a1a1a" stroke-width="0.2">17</text>
<text x="9.6" y="401.2" font-family="'Liberation Serif', serif" font-size="9.9" font-weight="normal" fill="#1a1a1a" text-anchor="middle" stroke="#1a1a1a" stroke-width="0.2">18</text>
<text x="9.6" y="413.2" font-family="'Liberation Serif', serif" font-size="9.9" font-weight="normal" fill="#1a1a1a" text-anchor="middle" stroke="#1a1a1a" stroke-width="0.2">19</text>
<text x="9.6" y="425.0" font-family="'Liberation Serif', serif" font-size="9.9" font-weight="normal" fill="#1a1a1a" text-anchor="middle" stroke="#1a1a1a" stroke-width="0.2">20</text>
<rect x="19.0" y="134.8" width="0.8" height="292.2" fill="#d2d2d2" />
<rect x="18.3" y="264.8" width="1.1" height="16.399999999999988" fill="#3a875a" />
<rect x="20" y="135.2" width="868" height="291.8" fill="#fff" />
<text x="69.6" y="149.3" font-family="'Liberation Serif', serif" font-size="13.9" font-weight="bold" fill="#111" text-anchor="start" textLength="261.8" lengthAdjust="spacingAndGlyphs" >QUY TRÌNH QUẢN LÝ NHÂN SỰ - CƠ BẢN</text>
<rect x="19.5" y="165.7" width="159.1" height="18.0" fill="#1f4e79" />
<text x="43.4" y="179.2" font-family="'Liberation Serif', serif" font-size="10.3" font-weight="bold" fill="#fff" text-anchor="start" textLength="110.6" lengthAdjust="spacingAndGlyphs" >DANH SÁCH NHÂN SỰ</text>
<rect x="19.5" y="183.7" width="159.1" height="16.5" fill="#d9e1f2" />
<text x="20.9" y="195.6" font-family="'Liberation Serif', serif" font-size="10.2" font-weight="normal" fill="#1a1a1a" text-anchor="start" textLength="71.6" lengthAdjust="spacingAndGlyphs" stroke="#1a1a1a" stroke-width="0.22">- Thông tin chung</text>
<rect x="19.5" y="200.2" width="159.1" height="16.0" fill="#ffffff" />
<rect x="19.5" y="199.7" width="159.1" height="0.9" fill="#a9bde0" />
<text x="20.9" y="211.70000000000002" font-family="'Liberation Serif', serif" font-size="10.2" font-weight="normal" fill="#1a1a1a" text-anchor="start" textLength="100.9" lengthAdjust="spacingAndGlyphs" stroke="#1a1a1a" stroke-width="0.22">- Phân chia theo bộ phận</text>
<rect x="19.5" y="216.2" width="159.1" height="16.200000000000017" fill="#d9e1f2" />
<rect x="19.5" y="215.7" width="159.1" height="0.9" fill="#a9bde0" />
<text x="20.9" y="227.8" font-family="'Liberation Serif', serif" font-size="10.2" font-weight="normal" fill="#1a1a1a" text-anchor="start" textLength="141.5" lengthAdjust="spacingAndGlyphs" stroke="#1a1a1a" stroke-width="0.22">- Thông tin trên hợp đồng lao động</text>
<rect x="19.5" y="232.4" width="159.1" height="16.0" fill="#ffffff" />
<rect x="19.5" y="231.9" width="159.1" height="0.9" fill="#a9bde0" />
<text x="20.9" y="243.9" font-family="'Liberation Serif', serif" font-size="10.2" font-weight="normal" fill="#1a1a1a" text-anchor="start" textLength="88.2" lengthAdjust="spacingAndGlyphs" stroke="#1a1a1a" stroke-width="0.22">- Tình trạng hợp đồng</text>
<rect x="19.5" y="248.4" width="159.1" height="16.099999999999994" fill="#d9e1f2" />
<rect x="19.5" y="247.9" width="159.1" height="0.9" fill="#a9bde0" />
<text x="20.9" y="259.9" font-family="'Liberation Serif', serif" font-size="10.2" font-weight="normal" fill="#1a1a1a" text-anchor="start" textLength="85.4" lengthAdjust="spacingAndGlyphs" stroke="#1a1a1a" stroke-width="0.22">- Tình trạng làm việc</text>
<rect x="19.2" y="165.7" width="159.7" height="1.1" fill="#163b60" />
<rect x="177.4" y="165.7" width="1.4" height="99.30000000000001" fill="#8e929a" />
<rect x="19.1" y="263.6" width="159.7" height="1.9" fill="#8e929a" />
<rect x="223.4" y="165.7" width="158.6" height="18.0" fill="#1f4e79" />
<text x="245.5" y="179.2" font-family="'Liberation Serif', serif" font-size="10.3" font-weight="bold" fill="#fff" text-anchor="start" textLength="114" lengthAdjust="spacingAndGlyphs" >HỢP ĐỒNG LAO ĐỘNG</text>
<rect x="223.4" y="183.7" width="158.6" height="16.5" fill="#d9e1f2" />
<text x="225.6" y="195.9" font-family="'Liberation Serif', serif" font-size="10.2" font-weight="normal" fill="#1a1a1a" text-anchor="start" textLength="114" lengthAdjust="spacingAndGlyphs" stroke="#1a1a1a" stroke-width="0.22">Tạo mẫu hợp đồng lao động</text>
<rect x="223.4" y="200.2" width="158.6" height="16.0" fill="#d9e1f2" />
<rect x="223.4" y="199.7" width="158.6" height="0.9" fill="#a9bde0" />
<text x="225.3" y="212.20000000000002" font-family="'Liberation Serif', serif" font-size="10.2" font-weight="normal" fill="#1a1a1a" text-anchor="start" textLength="147.4" lengthAdjust="spacingAndGlyphs" stroke="#1a1a1a" stroke-width="0.22">- Lấy thông tin từ danh sách nhân sự</text>
<rect x="223.4" y="216.2" width="158.6" height="16.200000000000017" fill="#d9e1f2" />
<rect x="223.4" y="215.7" width="158.6" height="0.9" fill="#a9bde0" />
<text x="225.3" y="228.1" font-family="'Liberation Serif', serif" font-size="10.2" font-weight="normal" fill="#1a1a1a" text-anchor="start" textLength="53.9" lengthAdjust="spacingAndGlyphs" stroke="#1a1a1a" stroke-width="0.22">- In hợp đồng</text>
<rect x="223.4" y="232.4" width="158.6" height="16.0" fill="#d9e1f2" />
<rect x="223.4" y="231.9" width="158.6" height="0.9" fill="#a9bde0" />
<text x="225.3" y="244.0" font-family="'Liberation Serif', serif" font-size="10.2" font-weight="normal" fill="#1a1a1a" text-anchor="start" textLength="120.9" lengthAdjust="spacingAndGlyphs" stroke="#1a1a1a" stroke-width="0.22">- Thay đổi thông tin hợp đồng</text>
<rect x="223.4" y="248.4" width="158.6" height="16.099999999999994" fill="#d9e1f2" />
<rect x="223.4" y="247.9" width="158.6" height="0.9" fill="#a9bde0" />
<rect x="223.1" y="165.7" width="159.2" height="1.1" fill="#163b60" />
<rect x="223.0" y="165.7" width="1" height="99.30000000000001" fill="#8e929a" />
<rect x="380.8" y="165.7" width="1.4" height="99.30000000000001" fill="#8e929a" />
<rect x="223.0" y="263.6" width="159.2" height="1.9" fill="#8e929a" />
<rect x="19.5" y="297.4" width="159.1" height="16.100000000000023" fill="#1f4e79" />
<text x="50" y="308.9" font-family="'Liberation Serif', serif" font-size="10.3" font-weight="bold" fill="#fff" text-anchor="start" textLength="97.3" lengthAdjust="spacingAndGlyphs" >BÁO CÁO CHI TIẾT</text>
<rect x="19.5" y="313.5" width="159.1" height="15.800000000000011" fill="#d9e1f2" />
<text x="21.1" y="325.29999999999995" font-family="'Liberation Serif', serif" font-size="10.2" font-weight="normal" fill="#1a1a1a" text-anchor="start" textLength="116.7" lengthAdjust="spacingAndGlyphs" stroke="#1a1a1a" stroke-width="0.22">- Chi tiết thông tin 1 nhân sự</text>
<rect x="19.2" y="297.4" width="159.7" height="1.1" fill="#163b60" />
<rect x="177.4" y="297.4" width="1.4" height="32.400000000000034" fill="#8e929a" />
<rect x="19.1" y="328.40000000000003" width="159.7" height="1.9" fill="#8e929a" />
<rect x="223.4" y="281.2" width="158.6" height="16.19999999999999" fill="#1f4e79" />
<text x="246.7" y="292.7" font-family="'Liberation Serif', serif" font-size="10.3" font-weight="bold" fill="#fff" text-anchor="start" textLength="112.9" lengthAdjust="spacingAndGlyphs" >THAY ĐỔI THÔNG TIN</text>
<rect x="223.4" y="297.4" width="158.6" height="16.100000000000023" fill="#d9e1f2" />
<text x="224.9" y="309.5" font-family="'Liberation Serif', serif" font-size="10.2" font-weight="normal" fill="#1a1a1a" text-anchor="start" textLength="78.5" lengthAdjust="spacingAndGlyphs" stroke="#1a1a1a" stroke-width="0.22">- Thông tin cá nhân</text>
<rect x="223.4" y="313.5" width="158.6" height="15.800000000000011" fill="#ffffff" />
<rect x="223.4" y="313.0" width="158.6" height="0.9" fill="#a9bde0" />
<text x="224.9" y="325.59999999999997" font-family="'Liberation Serif', serif" font-size="10.2" font-weight="normal" fill="#1a1a1a" text-anchor="start" textLength="85.7" lengthAdjust="spacingAndGlyphs" stroke="#1a1a1a" stroke-width="0.22">- Tình trạng làm việc</text>
<rect x="223.4" y="329.3" width="158.6" height="12.699999999999989" fill="#d9e1f2" />
<rect x="223.4" y="328.8" width="158.6" height="0.9" fill="#a9bde0" />
<text x="224.9" y="339.59999999999997" font-family="'Liberation Serif', serif" font-size="10.2" font-weight="normal" fill="#1a1a1a" text-anchor="start" textLength="60.9" lengthAdjust="spacingAndGlyphs" stroke="#1a1a1a" stroke-width="0.22">- Xóa nội dung</text>
<rect x="223.1" y="281.2" width="159.2" height="1.1" fill="#163b60" />
<rect x="223.0" y="281.2" width="1" height="61.30000000000001" fill="#8e929a" />
<rect x="380.8" y="281.2" width="1.4" height="61.30000000000001" fill="#8e929a" />
<rect x="223.0" y="341.1" width="159.2" height="1.9" fill="#8e929a" />
<line x1="183.1" y1="224.1" x2="216.79112280498916" y2="184.33342882034069" stroke="#222" stroke-width="0.8" />
<path d="M219.70,180.90 L218.13,186.78 L214.16,183.42 Z" fill="#111" stroke="none" stroke-width="1" />
<line x1="183.1" y1="226.9" x2="213.8539836786673" y2="299.9525396920959" stroke="#222" stroke-width="0.8" />
<path d="M215.60,304.10 L211.07,300.04 L215.86,298.02 Z" fill="#111" stroke="none" stroke-width="1" />
<line x1="99.5" y1="267.7" x2="99.5" y2="290.3" stroke="#222" stroke-width="0.8" />
<path d="M99.50,294.30 L97.00,289.30 L102.00,289.30 Z" fill="#111" stroke="none" stroke-width="1" />
<rect x="471.6" y="264.9" width="45.6" height="16.3" fill="none" stroke="#4f9a6d" stroke-width="1.3"/>
<rect x="515.4" y="279.2" width="1.2" height="1.2" fill="#fff" />
<rect x="516.3" y="280.3" width="1.9" height="1.9" fill="#1f6b41" />
<rect x="888" y="122" width="12" height="305" fill="#e6e6e6" />
<rect x="888" y="134.5" width="0.8" height="292.5" fill="#c6c6c6" />
<rect x="890.2" y="124" width="8" height="6.8" fill="#fff" stroke="#d0d0d0" stroke-width="0.5"/>
<path d="M892.2,128.5 l2,-2 l2,2 Z" fill="#666" stroke="none" stroke-width="1" />
<rect x="890.2" y="131.5" width="8" height="272.5" fill="#fff" stroke="#d0d0d0" stroke-width="0.5"/>
<rect x="890.2" y="419.6" width="8" height="7.2" fill="#fff" stroke="#d0d0d0" stroke-width="0.5"/>
<path d="M892.2,422.2 l2,2 l2,-2 Z" fill="#666" stroke="none" stroke-width="1" />
<rect x="0" y="427" width="900" height="13" fill="#e6e6e6" />
<rect x="0" y="426.6" width="900" height="0.9" fill="#c6c6c6" />
<path d="M14.8,431.8 l-1.3,1.5 l1.3,1.5 M26.8,431.8 l1.3,1.5 l-1.3,1.5" fill="none" stroke="#bbb" stroke-width="0.6" />
<rect x="48.3" y="427.4" width="46.4" height="11.6" fill="#f7f7f7" />
<rect x="48.3" y="437.3" width="46.4" height="1.3" fill="#3f8a5e" />
<text x="54" y="434.6" font-family="'Liberation Sans', sans-serif" font-size="7.2" font-weight="bold" fill="#217346" text-anchor="start" textLength="34.6" lengthAdjust="spacingAndGlyphs" >QuyTrinh</text>
<text x="100.3" y="434.5" font-family="'Liberation Sans', sans-serif" font-size="7.0" font-weight="normal" fill="#444" text-anchor="start" textLength="20.4" lengthAdjust="spacingAndGlyphs" >HDLD</text>
<rect x="127.8" y="429" width="0.6" height="8" fill="#bbb" />
<text x="134" y="434.5" font-family="'Liberation Sans', sans-serif" font-size="7.0" font-weight="normal" fill="#444" text-anchor="start" textLength="21" lengthAdjust="spacingAndGlyphs" >DSNV</text>
<rect x="161.2" y="429" width="0.6" height="8" fill="#bbb" />
<text x="167.3" y="434.5" font-family="'Liberation Sans', sans-serif" font-size="7.0" font-weight="normal" fill="#444" text-anchor="start" textLength="18.7" lengthAdjust="spacingAndGlyphs" >QTLV</text>
<rect x="192.6" y="429" width="0.6" height="8" fill="#bbb" />
<text x="198.5" y="434.5" font-family="'Liberation Sans', sans-serif" font-size="7.0" font-weight="normal" fill="#444" text-anchor="start" textLength="19.5" lengthAdjust="spacingAndGlyphs" >BCCT</text>
<rect x="223.4" y="429" width="0.6" height="8" fill="#bbb" />
<circle cx="244" cy="433.6" r="3.5" fill="none" stroke="#777" stroke-width="0.7"/>
<path d="M241.8,433.6 h4.4 M244,431.4 v4.4" fill="none" stroke="#555" stroke-width="0.7" />
<rect x="538.5" y="428.8" width="0.9" height="0.9" fill="#999" />
<rect x="538.5" y="431.5" width="0.9" height="0.9" fill="#999" />
<rect x="538.5" y="434.2" width="0.9" height="0.9" fill="#999" />
<rect x="547.6" y="430" width="8" height="7.6" fill="#fff" stroke="#cfcfcf" stroke-width="0.5"/>
<path d="M552.6,431.9 l-2.2,1.9 l2.2,1.9 Z" fill="#444" stroke="none" stroke-width="1" />
<rect x="556" y="430" width="299" height="7.6" fill="#fff" stroke="#cfcfcf" stroke-width="0.5"/>
<rect x="880" y="430" width="8" height="7.6" fill="#fff" stroke="#cfcfcf" stroke-width="0.5"/>
<path d="M883,431.9 l2.2,1.9 l-2.2,1.9 Z" fill="#444" stroke="none" stroke-width="1" />
<rect x="0" y="439.8" width="900" height="11.4" fill="#f0f0f0" />
<text x="4.4" y="448.3" font-family="'Liberation Sans', sans-serif" font-size="6.4" font-weight="normal" fill="#555" text-anchor="start" textLength="16.2" lengthAdjust="spacingAndGlyphs" >Ready</text>
<rect x="740" y="440" width="18" height="11.2" fill="#d4d4d4" />
<rect x="745.5" y="442.3" width="7" height="6.5" fill="none" stroke="#666" stroke-width="0.6"/>
<line x1="745.5" y1="444.5" x2="752.5" y2="444.5" stroke="#666" stroke-width="0.5" />
<line x1="745.5" y1="446.6" x2="752.5" y2="446.6" stroke="#666" stroke-width="0.5" />
<line x1="747.8" y1="442.3" x2="747.8" y2="448.8" stroke="#666" stroke-width="0.5" />
<line x1="750.2" y1="442.3" x2="750.2" y2="448.8" stroke="#666" stroke-width="0.5" />
<rect x="765" y="442.3" width="7" height="6.5" fill="none" stroke="#777" stroke-width="0.6"/>
<rect x="784" y="442.3" width="7" height="6.5" fill="none" stroke="#777" stroke-width="0.6"/>
<line x1="784" y1="444.3" x2="791" y2="444.3" stroke="#777" stroke-width="0.5" />
<line x1="800" y1="445.5" x2="803.5" y2="445.5" stroke="#444" stroke-width="0.9" />
<line x1="805" y1="445.5" x2="868" y2="445.5" stroke="#bbb" stroke-width="0.5" />
<rect x="836.6" y="442" width="1.6" height="7" fill="#555" />
<path d="M870,445.5 h3.5 M871.75,443.7 v3.6" fill="none" stroke="#555" stroke-width="0.8" />
<text x="878" y="448" font-family="'Liberation Sans', sans-serif" font-size="6.2" font-weight="normal" fill="#666" text-anchor="start" textLength="16" lengthAdjust="spacingAndGlyphs" >100%</text>
<rect x="451" y="451.2" width="449" height="1.8" fill="#000" />
<rect x="0" y="451.2" width="900" height="1.8" fill="#111" />
<rect x="202.5" y="451.2" width="28.5" height="1.8" fill="#d67b2c" />
<path d="M823.8,361 A6,6 0 0 1 835.8,361 L835.8,415.5 L846,415.5 L846,400.3 L862.3,416.1 L831,431.6 Q823.8,435.3 823.8,427 Z" fill="#cf2a36" stroke="none" stroke-width="1" />
<path d="M845.4,362.1 L863.7,372.8 L845.4,390.3 Z" fill="#cf2a36" stroke="none" stroke-width="1" />
<path d="M855.7,394.7 L872.3,377.7 L889,387.3 Q897,394.5 889,401.5 L871.1,410.5 Z" fill="#cf2a36" stroke="none" stroke-width="1" />
<text x="816.8" y="447.8" font-family="'Liberation Sans', sans-serif" font-size="16.6" font-weight="normal" fill="#cf2a36" text-anchor="start" textLength="81.2" lengthAdjust="spacingAndGlyphs" stroke="#cf2a36" stroke-width="0.55">kenhxaydung.vn</text>
</svg>
</body></html>
